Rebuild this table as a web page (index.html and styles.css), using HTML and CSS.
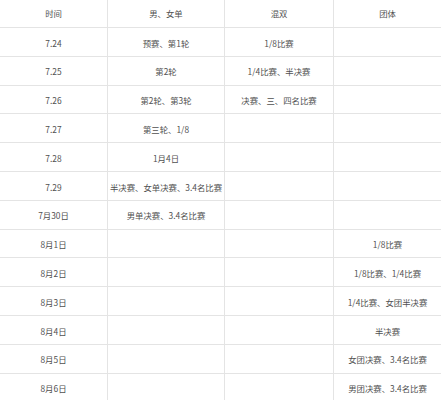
FILE: index.html
```html
<!DOCTYPE html>
<html lang="zh-CN">
<head>
<meta charset="utf-8">
<link rel="stylesheet" href="styles.css">
</head>
<body>
<div class="table">
  <div class="cell head">时间</div><div class="cell head">男、女单</div><div class="cell head">混双</div><div class="cell head last">团体</div>
  <div class="cell">7.24</div><div class="cell">预赛、第1轮</div><div class="cell">1/8比赛</div><div class="cell last"></div>
  <div class="cell">7.25</div><div class="cell">第2轮</div><div class="cell">1/4比赛、半决赛</div><div class="cell last"></div>
  <div class="cell">7.26</div><div class="cell">第2轮、第3轮</div><div class="cell">决赛、三、四名比赛</div><div class="cell last"></div>
  <div class="cell">7.27</div><div class="cell">第三轮、1/8</div><div class="cell"></div><div class="cell last"></div>
  <div class="cell">7.28</div><div class="cell">1月4日</div><div class="cell"></div><div class="cell last"></div>
  <div class="cell">7.29</div><div class="cell">半决赛、女单决赛、3.4名比赛</div><div class="cell"></div><div class="cell last"></div>
  <div class="cell">7月30日</div><div class="cell">男单决赛、3.4名比赛</div><div class="cell"></div><div class="cell last"></div>
  <div class="cell">8月1日</div><div class="cell"></div><div class="cell"></div><div class="cell last">1/8比赛</div>
  <div class="cell">8月2日</div><div class="cell"></div><div class="cell"></div><div class="cell last">1/8比赛、1/4比赛</div>
  <div class="cell">8月3日</div><div class="cell"></div><div class="cell"></div><div class="cell last">1/4比赛、女团半决赛</div>
  <div class="cell">8月4日</div><div class="cell"></div><div class="cell"></div><div class="cell last">半决赛</div>
  <div class="cell">8月5日</div><div class="cell"></div><div class="cell"></div><div class="cell last">女团决赛、3.4名比赛</div>
  <div class="cell">8月6日</div><div class="cell"></div><div class="cell"></div><div class="cell last">男团决赛、3.4名比赛</div>
</div>
</body>
</html>
```
FILE: styles.css
```css
html, body {
  margin: 0;
  padding: 0;
  background: #ffffff;
  overflow: hidden;
}
.table {
  display: grid;
  grid-template-columns: 108px 117px 109px 107px;
  grid-template-rows: 28px;
  grid-auto-rows: 28.8px;
  width: 441px;
  font-family: "Noto Sans CJK SC", "Noto Sans", sans-serif;
  font-size: 8.4px;
  color: #505050;
}
.cell {
  box-sizing: border-box;
  display: flex;
  align-items: center;
  justify-content: center;
  padding-top: 2px;
  border-right: 1px solid #e4e4e4;
  border-bottom: 1px solid #e4e4e4;
  white-space: nowrap;
  line-height: 1;
}
.head {
  padding-top: 0;
}
.last {
  border-right: none;
}
```
